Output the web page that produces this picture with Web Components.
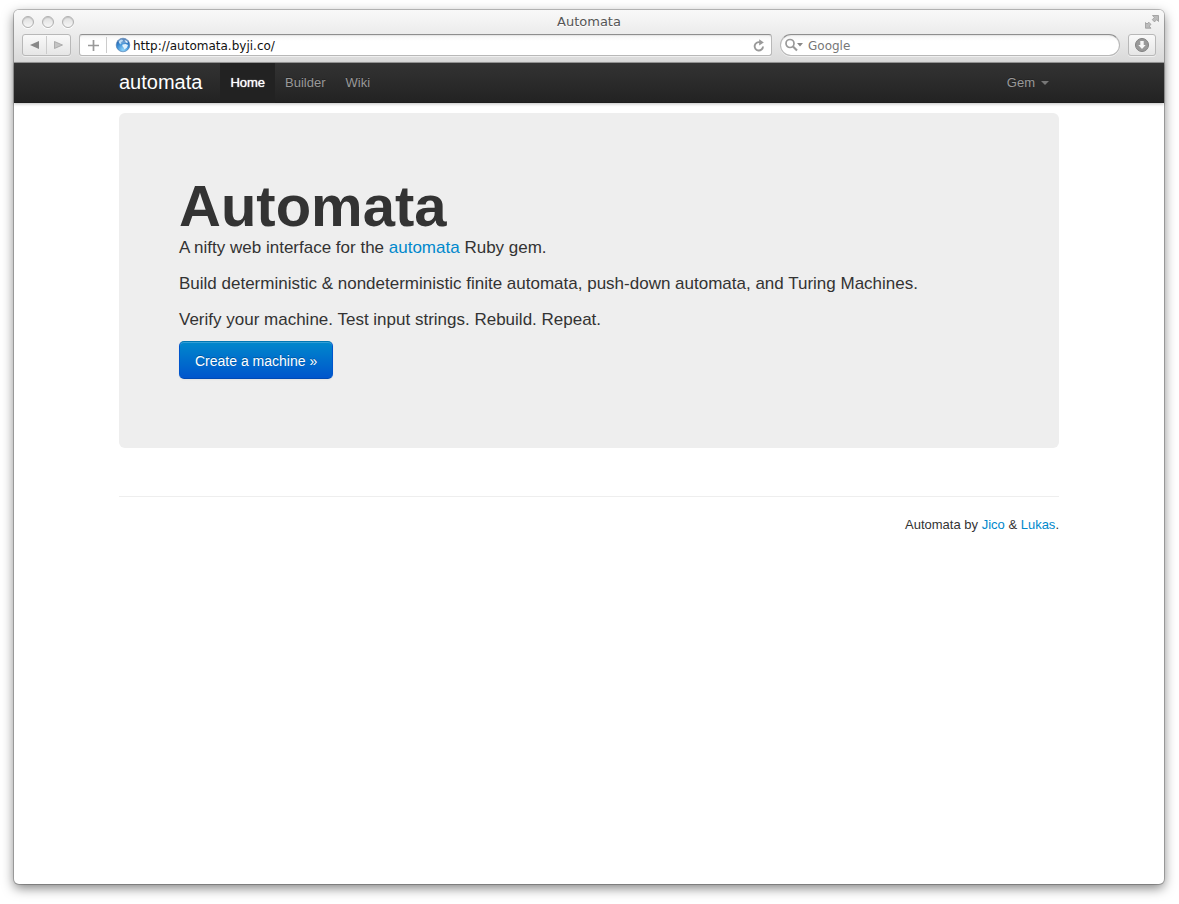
<!DOCTYPE html>
<html lang="en">
<head>
<meta charset="utf-8">
<title>Automata</title>
<style>
  html { background: #fff; }
  body {
    margin: 0; padding: 10px 15px 20px 14px; box-sizing: border-box; min-height: 100vh;
    display: flex; flex-direction: column;
    font: 13px/18px "Liberation Sans", Arial, sans-serif; color: #333;
  }
</style>
</head>
<body>
<browser-window>
  <browser-toolbar slot="chrome" heading="Automata" url="http://automata.byji.co/"></browser-toolbar>
  <site-navbar brand="automata">
    <nav-item active>Home</nav-item>
    <nav-item>Builder</nav-item>
    <nav-item>Wiki</nav-item>
    <nav-menu slot="end">Gem</nav-menu>
  </site-navbar>
  <site-container>
    <hero-unit heading="Automata">
      <hero-line>A nifty web interface for the <text-link>automata</text-link> Ruby gem.</hero-line>
      <hero-line>Build deterministic &amp; nondeterministic finite automata, push-down automata, and Turing Machines.</hero-line>
      <hero-line>Verify your machine. Test input strings. Rebuild. Repeat.</hero-line>
      <primary-button slot="action">Create a machine »</primary-button>
    </hero-unit>
    <site-footer>Automata by <text-link>Jico</text-link> &amp; <text-link>Lukas</text-link>.</site-footer>
  </site-container>
</browser-window>

<script>
const define = (name, html, setup) => customElements.define(name, class extends HTMLElement {
  constructor() {
    super();
    this.attachShadow({ mode: 'open' }).innerHTML = html;
  }
  connectedCallback() { if (setup) setup(this, this.shadowRoot); }
});

define('browser-window', `
<style>
  :host { flex: 1; display: flex; flex-direction: column; border-radius: 5px; background: #fff;
    box-shadow: 0 0 0 1px #00000038, 0 4px 12px #00000080; }
  main { display: block; }
</style>
<slot name="chrome"></slot><main><slot></slot></main>`);

define('browser-toolbar', `
<style>
  :host { display: block; box-sizing: border-box; height: 53px; border-bottom: 1px solid #999;
    border-radius: 5px 5px 0 0; background: linear-gradient(#f9f9f9, #ececec 45%, #d9d9d9);
    font: 12px/16px "DejaVu Sans", sans-serif; }
  .title { display: grid; grid-template-columns: 1fr auto 1fr; align-items: center; height: 24px; padding: 0 4px; }
  .lights { display: flex; gap: 8px; padding-left: 4px; }
  .lights button { width: 12px; height: 12px; padding: 0; box-sizing: border-box; border: 1px solid #b0b0b0; border-radius: 50%;
    background: linear-gradient(#dedede, #f7f7f7); box-shadow: inset 0 1px 1px #0002, 0 1px #fff; }
  h1 { margin: 0; font: inherit; font-size: 13px; color: #555; text-shadow: 0 1px #fff; }
  .expand { justify-self: end; width: 16px; height: 16px; border: 0; padding: 0; background: none; }
  svg { display: block; }
  .tools { display: grid; grid-template-columns: 49px minmax(0, 693fr) minmax(0, 340fr) 28px; gap: 8px; height: 22px; padding: 0 8px; }
  .tools > * { box-sizing: border-box; height: 22px; }
  .nav, .down { display: flex; align-items: center; justify-content: center; border: 1px solid #b8b8b8; border-radius: 3px;
    background: linear-gradient(#f9f9f9, #e6e6e6); padding: 0; box-shadow: 0 1px #fff8; }
  .nav button { flex: 1; height: 18px; border: 0; padding: 0; background: none; display: grid; place-items: center; }
  .nav button + button, .plus + .globe { border-left: 1px solid #ccc; }
  .field { display: flex; align-items: center; border: 1px solid #b8b8b8; border-top-color: #8e8e8e; border-radius: 3px;
    background: linear-gradient(#f4f4f4, #fff 30%); box-shadow: inset 0 1px 1px #0001, 0 1px #fff8; }
  .search { border-radius: 11px; padding: 0 4px; }
  .field button { border: 0; padding: 0; background: none; display: grid; place-items: center; }
  .plus { width: 26px; height: 16px; }
  .globe { padding: 0 2px 0 8px; }
  .reload { width: 24px; height: 20px; }
  input { flex: 1; min-width: 0; height: 20px; padding: 2px 0 0; box-sizing: border-box; border: 0; background: none; outline: 0; font: inherit; color: #111; }
  input::placeholder { color: #777; opacity: 1; }
</style>
<div class="title">
  <div class="lights"><button aria-label="Close"></button><button aria-label="Minimize"></button><button aria-label="Zoom"></button></div>
  <h1></h1>
  <button class="expand" aria-label="Full screen"><svg width="16" height="16" viewBox="0 0 16 16" fill="#bbb" stroke="#999" stroke-width=".8"><path d="M8.500 1.500h6v6l-1.800-1.800-2.200 2.200-2.200-2.200 2-2.200zM1.500 8.500l1.500 1.500 1.800-1.800 2.200 2.200-1.800 1.800 1.800 2h-5.500z"/></svg></button>
</div>
<div class="tools">
  <div class="nav">
    <button aria-label="Back"><svg width="9" height="8" viewBox="0 0 9 8"><path d="M9 0v8L0 4z" fill="#888"/></svg></button>
    <button aria-label="Forward"><svg width="9" height="8" viewBox="0 0 9 8"><path d="M0.500 0.500v7L8.500 4z" fill="#c4c4c4" stroke="#999" stroke-width=".7"/></svg></button>
  </div>
  <div class="field address">
    <button class="plus" aria-label="Add bookmark"><svg width="11" height="11" viewBox="0 0 11 11"><path d="M5.500 0v11M0 5.500h11" stroke="#999" stroke-width="1.700"/></svg></button>
    <span class="globe"><svg width="16" height="16" viewBox="0 0 16 16">
      <defs><radialGradient id="g" cx=".5" cy=".85" r=".9"><stop offset="0" stop-color="#8fd4fa"/><stop offset=".5" stop-color="#3d8fd6"/><stop offset="1" stop-color="#1c4f96"/></radialGradient></defs>
      <circle cx="8" cy="8" r="6.800" fill="url(#g)" stroke="#4a78ad" stroke-width=".6"/>
      <path d="M4 4l2-1.500 2 .5-.5 1.500-1.500.5.500 1.500-1 1-1.500-1.500z" fill="#a9d0ee"/><path d="M7.500 7.500l3-.5 2.500 1-1 2.500-2.500 2-1-2-1.200-1.500zM9.500 3l2.500 1 1 2-2-.5z" fill="#dff1fc"/>
      <ellipse cx="8" cy="4" rx="5" ry="2.500" fill="#fff" opacity=".25"/></svg></span>
    <input type="text" class="url" aria-label="Address">
    <button class="reload" aria-label="Reload"><svg width="12" height="13" viewBox="0 0 12 13"><path d="M10 7.500A4.200 4.200 0 1 1 7 3.300" fill="none" stroke="#999" stroke-width="1.900"/><path d="M6.200 .3L10.800 3.500 6.200 6.500z" fill="#999"/></svg></button>
  </div>
  <div class="field search">
    <svg width="23" height="14" viewBox="0 0 23 14" fill="none" stroke="#999"><circle cx="5" cy="5.500" r="4" stroke-width="1.700"/><path d="M8 8.500l4 4" stroke-width="2.200"/><path d="M12 5h6l-3 3.500z" fill="#888" stroke="none"/></svg>
    <input type="search" placeholder="Google" aria-label="Search">
  </div>
  <button class="down" aria-label="Downloads"><svg width="14" height="14" viewBox="0 0 14 14"><circle cx="7" cy="7" r="6.500" fill="#999" stroke="#808080"/><path d="M5.300 3h3.400v4h2L7 11 3.300 7h2z" fill="#f7f7f7"/></svg></button>
</div>`, (el, root) => {
  root.querySelector('h1').textContent = el.getAttribute('heading');
  root.querySelector('.url').value = el.getAttribute('url');
});

define('site-navbar', `
<style>
  :host { display: block; background: linear-gradient(#333, #222); box-shadow: 0 1px 3px #00000040, inset 0 -1px #0000001a; }
  nav { display: flex; box-sizing: border-box; max-width: 940px; height: 40px; margin: 0 auto; }
  .brand { padding: 0 18px 0 0; font-size: 20px; line-height: 39px; color: #fff; text-decoration: none; }
  .end { display: flex; margin-left: auto; }
</style>
<nav><a class="brand" href="#"></a><slot></slot><div class="end"><slot name="end"></slot></div></nav>`,
(el, root) => { root.querySelector('.brand').textContent = el.getAttribute('brand'); });

define('nav-item', `
<style>
  :host { display: block; }
  a { display: block; padding: 0 10px; line-height: 40px; color: #999; text-decoration: none; text-shadow: 0 -1px #00000040; }
  :host([active]) a { color: #fff; background: #222; text-shadow: 0 0 1px #fff; }
</style>
<a href="#"><slot></slot></a>`);

define('nav-menu', `
<style>
  button { display: flex; align-items: center; gap: 6px; height: 40px; padding: 0 10px; border: 0; background: none;
    font: inherit; color: #999; text-shadow: 0 -1px #00000040; }
  i { border: 4px solid transparent; border-top-color: #777; border-bottom: 0; }
</style>
<button aria-haspopup="true"><slot></slot><i></i></button>`);

define('site-container', `
<style>:host { display: block; max-width: 940px; margin: 10px auto 0; }</style><slot></slot>`);

define('hero-unit', `
<style>
  :host { display: block; padding: 66px 60px 69px; border-radius: 6px; background: #eee; }
  h1 { margin: 0; font-size: 58px; line-height: 54px; }
</style>
<h1></h1><slot></slot><slot name="action"></slot>`,
(el, root) => { root.querySelector('h1').textContent = el.getAttribute('heading'); });

define('hero-line', `
<style>:host { display: block; } p { margin: 0; padding: 1px 0 8px; font-size: 17px; line-height: 27px; }</style>
<p><slot></slot></p>`);

define('text-link', `
<style>a { color: #08c; text-decoration: none; }</style><a href="#"><slot></slot></a>`);

define('primary-button', `
<style>
  :host { display: flex; }
  button { padding: 10px 15px 8px; border: 1px solid #0055cc; border-color: #0077b3 #0055cc #0049b3; border-radius: 5px;
    background: linear-gradient(#08c, #05c); color: #fff; font: inherit; font-size: 14px;
    text-shadow: 0 -1px #00000040; box-shadow: inset 0 1px #ffffff33, 0 1px 2px #0000000d; }
</style>
<button><slot></slot></button>`);

define('site-footer', `
<style>
  :host { display: block; margin-top: 48px; padding-top: 19px; border-top: 1px solid #eee; text-align: right; }
</style>
<footer><slot></slot></footer>`);
</script>
</body>
</html>
